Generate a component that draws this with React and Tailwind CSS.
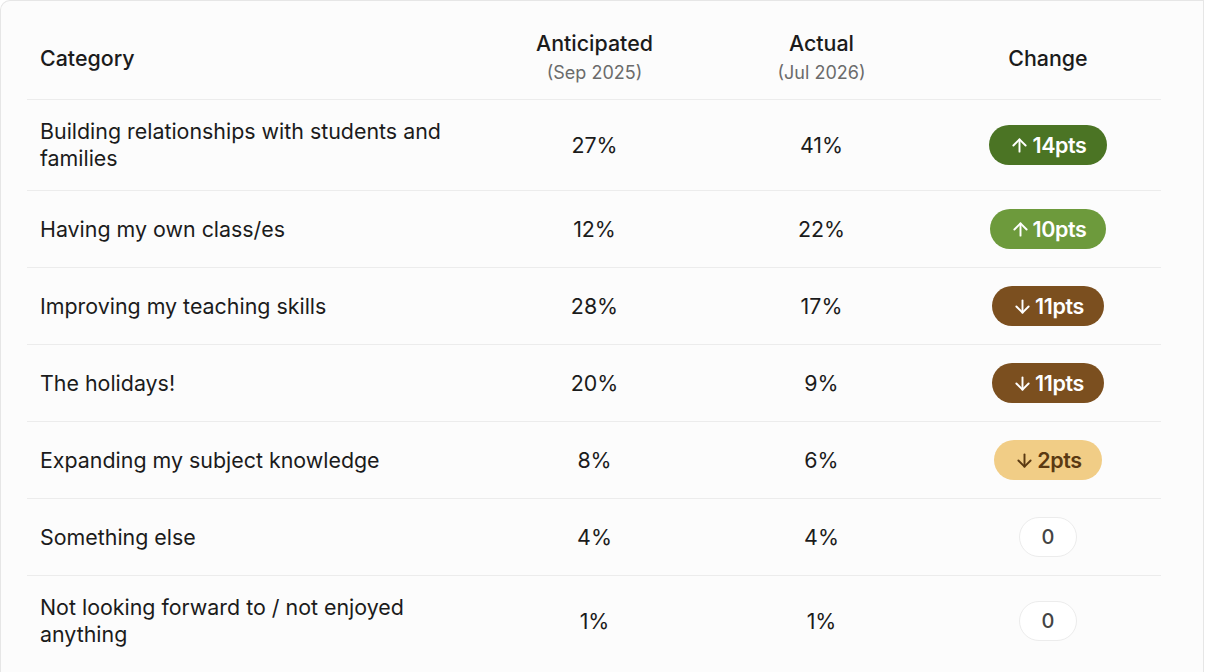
import React from 'react'
import { ArrowUp, ArrowDown } from 'lucide-react'

const rows = [
  { cat: 'Building relationships with students and families', ant: '27%', act: '41%', dir: 'up', pts: 14, tone: 'bg-[#4b7424] text-white' },
  { cat: 'Having my own class/es', ant: '12%', act: '22%', dir: 'up', pts: 10, tone: 'bg-[#6d9a3c] text-white' },
  { cat: 'Improving my teaching skills', ant: '28%', act: '17%', dir: 'down', pts: 11, tone: 'bg-[#7b4f1f] text-white' },
  { cat: 'The holidays!', ant: '20%', act: '9%', dir: 'down', pts: 11, tone: 'bg-[#7b4f1f] text-white' },
  { cat: 'Expanding my subject knowledge', ant: '8%', act: '6%', dir: 'down', pts: 2, tone: 'bg-[#f1cd86] text-[#5a3912]' },
  { cat: 'Something else', ant: '4%', act: '4%', dir: null },
  { cat: 'Not looking forward to / not enjoyed anything', ant: '1%', act: '1%', dir: null },
]

function Badge({ r }) {
  if (!r.dir) {
    return (
      <span className="inline-flex h-[40px] items-center rounded-full border border-[#ececec] bg-white px-[22px] text-[20px] font-medium text-[#444]">
        0
      </span>
    )
  }
  const Icon = r.dir === 'up' ? ArrowUp : ArrowDown
  return (
    <span className={`inline-flex h-[40px] items-center gap-[2px] rounded-full px-[20px] text-[21.5px] font-semibold tracking-[-0.4px] ${r.tone}`}>
      <Icon size={21} strokeWidth={2.2} />
      {r.pts}pts
    </span>
  )
}

export default function App() {
  return (
    <div className="min-h-[672px] bg-white font-['Inter',sans-serif] text-[#1b1b1b]">
      <div className="mr-[2px] min-h-[672px] rounded-tl-[10px] border-t border-r border-l border-[#e6e6e6] bg-[#fcfcfc] px-[26px] pt-[4px]">
        <table className="w-[1134px] border-collapse">
          <thead>
            <tr className="border-b border-[#ececec]">
              <th className="w-[454px] pt-[24px] pb-[12px] pl-[13px] text-left text-[21.4px] font-medium">Category</th>
              <th className="w-[227px] pt-[24px] pb-[12px] text-center font-medium">
                <div className="text-[21.4px] leading-[29px]">Anticipated</div>
                <div className="text-[18px] font-normal leading-[29px] text-[#6b6b6b]">(Sep 2025)</div>
              </th>
              <th className="w-[227px] pt-[24px] pb-[12px] text-center font-medium">
                <div className="text-[21.4px] leading-[29px]">Actual</div>
                <div className="text-[18px] font-normal leading-[29px] text-[#6b6b6b]">(Jul 2026)</div>
              </th>
              <th className="w-[226px] pt-[24px] pb-[12px] text-center text-[21.4px] font-medium">Change</th>
            </tr>
          </thead>
          <tbody>
            {rows.map((r, i) => (
              <tr key={i} className={i < rows.length - 1 ? 'border-b border-[#ececec]' : ''}>
                <td className="py-[18px] pl-[13px] pr-[14px] text-[21.4px] leading-[27px]">
                  <div className="max-w-[420px]">{r.cat}</div>
                </td>
                <td className="py-[18px] text-center text-[21.4px]">{r.ant}</td>
                <td className="py-[18px] text-center text-[21.4px]">{r.act}</td>
                <td className="py-[18px] text-center">
                  <Badge r={r} />
                </td>
              </tr>
            ))}
          </tbody>
        </table>
      </div>
    </div>
  )
}
